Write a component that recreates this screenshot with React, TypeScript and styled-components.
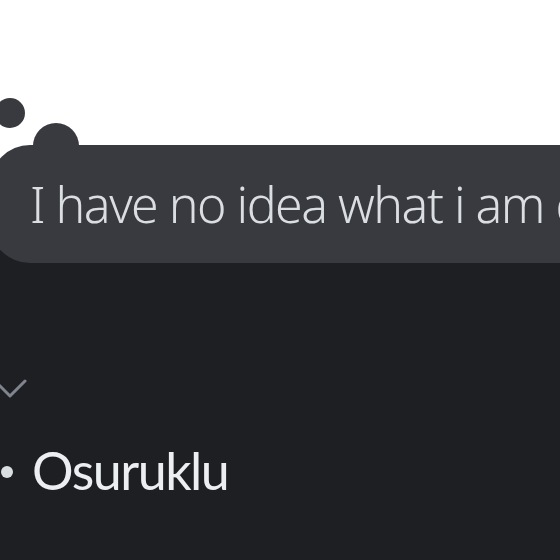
import styled, { createGlobalStyle } from "styled-components";

const GlobalStyle = createGlobalStyle`
    html, body {
        margin: 0;
        padding: 0;
        background: #1e1f22;
    }
    body {
        width: 560px;
        height: 560px;
        overflow: hidden;
        font-family: "Noto Sans", "Open Sans", sans-serif;
    }
`;

const App: React.FC = () => (
    <>
        <GlobalStyle />
        <Page>
            <Banner />
            <Body>
                <BubbleWrap>
                    <Dot size={30} left={5} top={-47} />
                    <Dot size={46} left={43} top={-22} />
                    <Bubble>I have no idea what i am doing</Bubble>
                </BubbleWrap>

                <Chevron width="34" height="22" viewBox="0 0 34 22">
                    <polyline points="2,3 17,18 32,3" />
                </Chevron>

                <NameRow>
                    <Bullet />
                    <Name>Osuruklu</Name>
                </NameRow>
            </Body>
        </Page>
    </>
);

export default App;

// Styled Components
const Page = styled.div`
    width: 560px;
    height: 560px;
    display: flex;
    flex-direction: column;
    overflow: hidden;
`;

const Banner = styled.div`
    height: 205px;
    flex-shrink: 0;
    background: #ffffff;
`;

const Body = styled.div`
    flex: 1;
    background: #1e1f22;
    display: flex;
    flex-direction: column;
`;

const BubbleWrap = styled.div`
    position: relative;
    margin: -60px 0 0 -10px;
    width: 640px;
`;

const Dot = styled.div<{ size: number; left: number; top: number }>`
    position: absolute;
    width: ${(p) => p.size}px;
    height: ${(p) => p.size}px;
    left: ${(p) => p.left}px;
    top: ${(p) => p.top}px;
    border-radius: 50%;
    background: #383a40;
`;

const Bubble = styled.div`
    position: relative;
    height: 118px;
    line-height: 118px;
    padding-left: 40px;
    border-radius: 40px;
    background: #383a40;
    color: #dbdee1;
    font-size: 50px;
    font-weight: 300;
    letter-spacing: -1.5px;
    white-space: nowrap;
`;

const Chevron = styled.svg`
    margin: 115px 0 0 -7px;
    fill: none;
    stroke: #80848e;
    stroke-width: 3;
    stroke-linecap: round;
    stroke-linejoin: round;
`;

const NameRow = styled.div`
    display: flex;
    align-items: center;
    gap: 19px;
    margin-top: 40px;
`;

const Bullet = styled.span`
    width: 12px;
    height: 12px;
    margin-left: 1px;
    margin-top: 4px;
    border-radius: 50%;
    background: #dbdee1;
`;

const Name = styled.span`
    color: #eceef1;
    font-family: Lato, "Noto Sans", sans-serif;
    font-size: 52px;
    line-height: 60px;
    letter-spacing: -1.5px;
`;
